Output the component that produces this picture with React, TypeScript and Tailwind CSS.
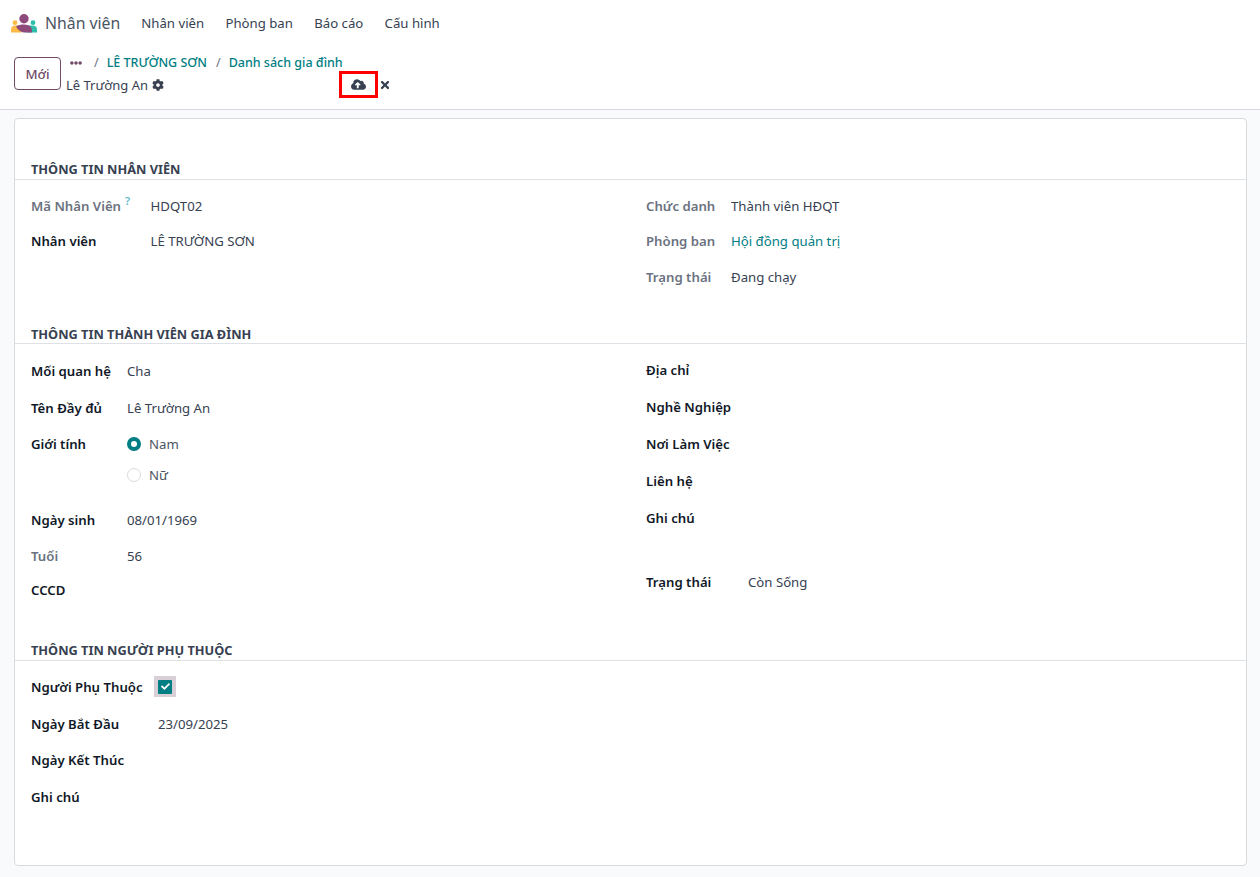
import { FaCloudUploadAlt, FaCog, FaEllipsisH, FaTimes, FaCheck } from "react-icons/fa";

const TEAL = "text-[#017e84]";

function Logo() {
  return (
    <svg width="26" height="19" viewBox="0 0 26 19" className="shrink-0">
      <circle cx="13" cy="4.7" r="4.7" fill="#8f4a7c" />
      <circle cx="4" cy="8.7" r="2.4" fill="#fbb945" />
      <circle cx="22" cy="8.7" r="2.4" fill="#2ebcab" />
      <path d="M0 18.5 L0 15.5 C0 12.5 2 11.5 4.5 11.5 L8 11.5 L11 18.5 Z" fill="#fbb945" />
      <path d="M26 18.5 L26 15.5 C26 12.5 24 11.5 21.5 11.5 L17 11.5 L15 18.5 Z" fill="#2ebcab" />
      <path d="M5 12.5 C7 11 10 10.5 13 10.5 C16 10.5 19 11.5 20 13 C21 15 21 18.5 21 18.5 L14 18.5 C10 18.5 7 16 5 12.5 Z" fill="#8f4a7c" />
    </svg>
  );
}

function Title({ children, className = "" }: { children: string; className?: string }) {
  return (
    <div className={`h-[22px] border-b border-[#dee2e6] pl-4 text-[12.75px] leading-[20px] font-bold text-[#374151] ${className}`}>
      {children}
    </div>
  );
}

interface RowProps {
  label: string;
  value?: string;
  width: string;
  height: string;
  muted?: boolean;
  link?: boolean;
  hint?: boolean;
}

function Row({ label, value, width, height, muted, link, hint }: RowProps) {
  return (
    <div className={`flex items-center ${height}`}>
      <span className={`${width} shrink-0 font-semibold ${muted ? "text-[#6b7280]" : "text-[#111827]"}`}>
        {label}
        {hint && <sup className="ml-[4px] text-[11px] font-semibold text-[#67b8cc]">?</sup>}
      </span>
      {value && <span className={link ? TEAL : "text-[#374151]"}>{value}</span>}
    </div>
  );
}

function Radio({ label, checked }: { label: string; checked?: boolean }) {
  return (
    <div className="flex items-center gap-2">
      {checked ? (
        <span className="w-[14px] h-[14px] rounded-full border-[4px] border-[#017e84] bg-white" />
      ) : (
        <span className="w-[14px] h-[14px] rounded-full border border-[#d8dadd] bg-white" />
      )}
      <span className="text-[#4b5563]">{label}</span>
    </div>
  );
}

export default function App() {
  return (
    <div
      className="w-[1260px] h-[877px] overflow-hidden bg-[#f9fafb] text-[13.2px] leading-[20px] text-[#374151]"
      style={{ fontFamily: '"Noto Sans", sans-serif' }}
    >
      {/* top nav */}
      <nav className="h-[46px] bg-white flex items-center pl-[11px]">
        <Logo />
        <span className="ml-[8px] text-[15.8px] text-[#4b5563]">Nhân viên</span>
        <div className="ml-[21px] flex gap-[21.3px] text-[13.2px] text-[#374151]">
          <span>Nhân viên</span>
          <span>Phòng ban</span>
          <span>Báo cáo</span>
          <span>Cấu hình</span>
        </div>
      </nav>

      {/* control panel */}
      <div className="h-[64px] bg-white border-b border-[#d8dadd] flex items-start pl-[14px] pt-[11px]">
        <button className="w-[47px] h-[33px] border border-[#714b67] rounded-[4px] font-medium text-[#714b67]">Mới</button>
        <div className="ml-[5px] w-[325px]">
          <div className="flex items-center h-[17px] -mt-[3px] pl-[4px] text-[12.5px] font-medium">
            <FaEllipsisH className="text-[#714b67] w-[12px] h-[12px]" />
            <span className="ml-[12px] text-[#6b7280] font-normal">/</span>
            <span className={`ml-[8px] ${TEAL}`}>LÊ TRƯỜNG SƠN</span>
            <span className="ml-[9px] text-[#6b7280] font-normal">/</span>
            <span className={`ml-[8px] ${TEAL}`}>Danh sách gia đình</span>
          </div>
          <div className="flex items-center h-[27px]">
            <span className="text-[13px] text-[#374151]">Lê Trường An</span>
            <FaCog className="ml-[4px] w-[12px] h-[12px] text-[#374151]" />
            <button className="ml-auto w-[39px] h-[27px] border-[3px] border-[#ff0000] flex items-center justify-center">
              <FaCloudUploadAlt className="w-[15px] h-[15px] text-[#374151]" />
            </button>
            <FaTimes className="ml-[1px] w-[12px] h-[12px] text-[#374151]" />
          </div>
        </div>
      </div>

      {/* form sheet */}
      <main className="mt-[8px] ml-[14px] w-[1233px] h-[748px] bg-white border border-[#d8dadd] rounded-[4px] pt-[39px]">
        <Title className="pt-[1px]">THÔNG TIN NHÂN VIÊN</Title>
        <div className="grid grid-cols-[615px_1fr] pl-4 pt-[8px]">
          <div>
            <Row label="Mã Nhân Viên" hint width="w-[119.5px]" height="h-[35px]" muted value="HDQT02" />
            <Row label="Nhân viên" width="w-[119.5px]" height="h-[36px]" value="LÊ TRƯỜNG SƠN" />
          </div>
          <div>
            <Row label="Chức danh" width="w-[85px]" height="h-[35px]" muted value="Thành viên HĐQT" />
            <Row label="Phòng ban" width="w-[85px]" height="h-[36px]" muted link value="Hội đồng quản trị" />
            <Row label="Trạng thái" width="w-[85px]" height="h-[36px]" muted value="Đang chạy" />
          </div>
        </div>

        <Title className="mt-[27px] pt-[2px]">THÔNG TIN THÀNH VIÊN GIA ĐÌNH</Title>
        <div className="grid grid-cols-[615px_1fr] pl-4 pt-[7px]">
          <div className="pt-[1px]">
            <Row label="Mối quan hệ" width="w-[96px]" height="h-[37px]" value="Cha" />
            <Row label="Tên Đầy đủ" width="w-[96px]" height="h-[37px]" value="Lê Trường An" />
            <div className="flex h-[76px] pt-[8px]">
              <span className="w-[96px] font-semibold text-[#111827]">Giới tính</span>
              <div className="flex flex-col gap-[11px]">
                <Radio label="Nam" checked />
                <Radio label="Nữ" />
              </div>
            </div>
            <Row label="Ngày sinh" width="w-[96px]" height="h-[36px]" value="08/01/1969" />
            <Row label="Tuổi" width="w-[96px]" height="h-[36px]" muted value="56" />
            <Row label="CCCD" width="w-[96px]" height="h-[32px]" />
          </div>
          <div>
            <Row label="Địa chỉ" width="w-[102px]" height="h-[37px]" />
            <Row label="Nghề Nghiệp" width="w-[102px]" height="h-[37px]" />
            <Row label="Nơi Làm Việc" width="w-[102px]" height="h-[37px]" />
            <Row label="Liên hệ" width="w-[102px]" height="h-[37px]" />
            <Row label="Ghi chú" width="w-[102px]" height="h-[37px]" />
            <div className="h-[27px]" />
            <Row label="Trạng thái" width="w-[102px]" height="h-[37px]" value="Còn Sống" />
          </div>
        </div>

        <Title className="mt-[33px] pt-[1px]">THÔNG TIN NGƯỜI PHỤ THUỘC</Title>
        <div className="pl-4 pt-[7px]">
          <div className="flex items-center h-[37px]">
            <span className="w-[123px] font-semibold text-[#111827]">Người Phụ Thuộc</span>
            <span className="w-[22px] h-[21px] bg-[#d8d0d6] flex items-center justify-center">
              <span className="w-[14px] h-[14px] bg-[#017e84] rounded-[1px] flex items-center justify-center">
                <FaCheck className="w-[9px] h-[9px] text-white" />
              </span>
            </span>
          </div>
          <Row label="Ngày Bắt Đầu" width="w-[127px]" height="h-[37px]" value="23/09/2025" />
          <Row label="Ngày Kết Thúc" width="w-[127px]" height="h-[36px]" />
          <Row label="Ghi chú" width="w-[127px]" height="h-[37px]" />
        </div>
      </main>
    </div>
  );
}
